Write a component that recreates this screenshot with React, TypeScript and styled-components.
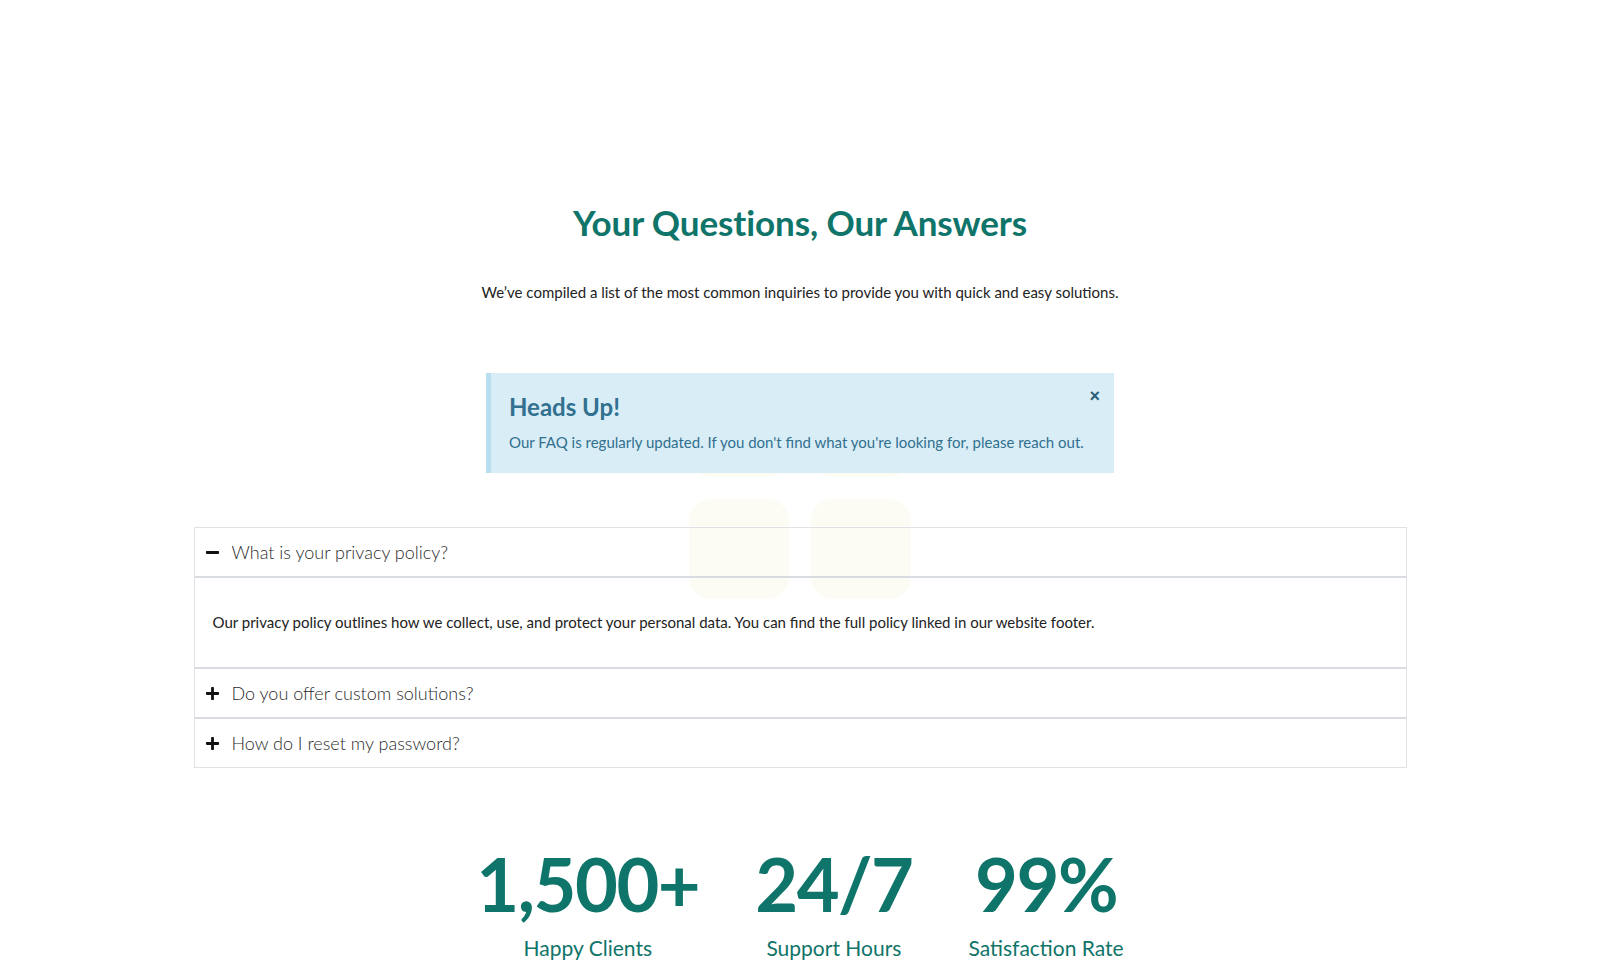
import React, { useState } from 'react';
import styled, { createGlobalStyle } from 'styled-components';
import { FaMinus, FaPlus } from 'react-icons/fa';

const GlobalStyle = createGlobalStyle`
  body {
    margin: 0;
    background: #ffffff;
    font-family: Lato, "Noto Sans", sans-serif;
    color: #222;
  }
`;

const Page = styled.main`
  position: relative;
  padding: 201px 0 40px;
  overflow: hidden;
`;

const Tiles = styled.div`
  position: absolute;
  top: 377px;
  left: 689px;
  display: grid;
  grid-template-columns: repeat(2, 100px);
  grid-auto-rows: 100px;
  gap: 22px;
  z-index: 0;
  pointer-events: none;
`;

const Tile = styled.div`
  background: #fcfbf4;
  border-radius: 22px;
`;

const Content = styled.div`
  position: relative;
  z-index: 1;
  display: flex;
  flex-direction: column;
  align-items: center;
`;

const Title = styled.h1`
  margin: 0;
  font-size: 35px;
  font-weight: 700;
  color: #0f7469;
  letter-spacing: -0.1px;
`;

const Subtitle = styled.p`
  margin: 40px 0 0;
  font-size: 15px;
  color: #222;
`;

const Alert = styled.div`
  position: relative;
  box-sizing: border-box;
  width: 628px;
  margin-top: 72px;
  padding: 18px 14px 20px 18px;
  background: #d9edf7;
  border-left: 5px solid #b9def0;
  color: #31708f;
`;

const AlertTitle = styled.h4`
  margin: 0;
  font-size: 24px;
  font-weight: 700;
  line-height: 32px;
`;

const AlertText = styled.p`
  margin: 8px 0 0;
  font-size: 15px;
  line-height: 22px;
  white-space: nowrap;
`;

const Close = styled.button`
  position: absolute;
  top: 13px;
  right: 14px;
  border: none;
  background: none;
  padding: 0;
  font-family: Arial, "Liberation Sans", sans-serif;
  font-size: 18px;
  font-weight: 700;
  color: #2a5d78;
  cursor: pointer;
`;

const Accordion = styled.div`
  box-sizing: border-box;
  width: 1213px;
  margin-top: 54px;
  border: 1px solid #dfe1e4;
`;

const Item = styled.div<{ $last?: boolean }>`
  border-bottom: ${p => (p.$last ? 'none' : '2px solid #d8dbdf')};
`;

const Header = styled.button`
  display: flex;
  align-items: center;
  gap: 12px;
  width: 100%;
  height: 48px;
  padding: 0 10px;
  border: none;
  background: transparent;
  font-family: inherit;
  font-size: 18px;
  font-weight: 300;
  color: #2b2b2b;
  text-align: left;
  cursor: pointer;

  svg {
    width: 15px;
    height: 15px;
    color: #111;
  }
`;

const Panel = styled.div`
  border-top: 2px solid #d8dbdf;
  padding: 34px 18px 35px;
  font-size: 15px;
  line-height: 20px;
  color: #222;
`;

const Stats = styled.div`
  display: flex;
  gap: 56px;
  margin-top: 77px;
`;

const Stat = styled.div`
  display: flex;
  flex-direction: column;
  align-items: center;
`;

const Number = styled.div`
  font-size: 74px;
  font-weight: 700;
  line-height: 78px;
  letter-spacing: -1.5px;
  color: #0f7469;
`;

const Label = styled.div`
  margin-top: 12px;
  font-size: 21px;
  color: #0f7469;
`;

const faqs = [
  {
    q: 'What is your privacy policy?',
    a: 'Our privacy policy outlines how we collect, use, and protect your personal data. You can find the full policy linked in our website footer.',
  },
  { q: 'Do you offer custom solutions?', a: 'Yes, we tailor our services to fit your needs.' },
  { q: 'How do I reset my password?', a: 'Use the "Forgot password" link on the login page.' },
];

const stats = [
  { value: '1,500+', label: 'Happy Clients' },
  { value: '24/7', label: 'Support Hours' },
  { value: '99%', label: 'Satisfaction Rate' },
];

export default function App() {
  const [open, setOpen] = useState(0);
  const [showAlert, setShowAlert] = useState(true);

  return (
    <Page>
      <GlobalStyle />
      <Tiles>
        {Array.from({ length: 4 }).map((_, i) => (
          <Tile key={i} />
        ))}
      </Tiles>
      <Content>
        <Title>Your Questions, Our Answers</Title>
        <Subtitle>
          We’ve compiled a list of the most common inquiries to provide you with quick and easy solutions.
        </Subtitle>

        {showAlert && (
          <Alert>
            <Close onClick={() => setShowAlert(false)}>×</Close>
            <AlertTitle>Heads Up!</AlertTitle>
            <AlertText>
              Our FAQ is regularly updated. If you don't find what you're looking for, please reach out.
            </AlertText>
          </Alert>
        )}

        <Accordion>
          {faqs.map((f, i) => (
            <Item key={f.q} $last={i === faqs.length - 1}>
              <Header onClick={() => setOpen(open === i ? -1 : i)}>
                {open === i ? <FaMinus /> : <FaPlus />}
                {f.q}
              </Header>
              {open === i && <Panel>{f.a}</Panel>}
            </Item>
          ))}
        </Accordion>

        <Stats>
          {stats.map(s => (
            <Stat key={s.label}>
              <Number>{s.value}</Number>
              <Label>{s.label}</Label>
            </Stat>
          ))}
        </Stats>
      </Content>
    </Page>
  );
}
